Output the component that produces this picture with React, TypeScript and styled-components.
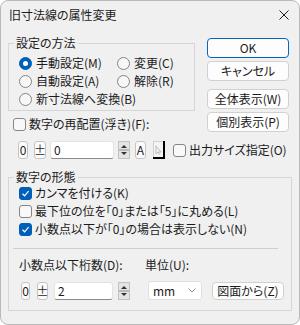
import React from 'react';
import styled, { createGlobalStyle } from 'styled-components';

const Global = createGlobalStyle`
  html, body { margin: 0; padding: 0; background: #ffffff; }
  body {
    font-family: "Noto Sans CJK JP", "Noto Sans", sans-serif;
    font-size: 12px;
    color: #1b1b1b;
    font-feature-settings: "palt" 1;
  }
  * { box-sizing: border-box; }
`;

const Window = styled.div`
  width: 300px;
  height: 325px;
  background: #f0f0f0;
  border: 1px solid #b9b9b9;
  border-radius: 8px;
  display: flex;
  flex-direction: column;
  overflow: hidden;
`;

const TitleBar = styled.div`
  height: 35px;
  flex: none;
  display: flex;
  align-items: flex-start;
  justify-content: space-between;
  padding: 6px 10px 0 8px;
`;

const TitleText = styled.span`
  line-height: 16px;
  font-size: 12px;
  color: #1b1b1b;
`;

const CloseIcon = styled.svg`
  margin-top: 3px;
  width: 10px;
  height: 10px;
`;

const Body = styled.div`
  padding: 0 7px;
  display: flex;
  flex-direction: column;
`;

const TopSection = styled.div`
  display: flex;
  gap: 12px;
`;

const LeftCol = styled.div`
  display: flex;
  flex-direction: column;
`;

const RightCol = styled.div`
  width: 82px;
  padding-top: 2px;
  display: flex;
  flex-direction: column;
`;

const GroupBox = styled.fieldset<{ $w: number }>`
  margin: 0;
  padding: 0;
  width: ${(p) => p.$w}px;
  border: 1px solid #d6d6d6;
  min-width: 0;
`;

const Legend = styled.legend`
  margin-left: 5px;
  padding: 0 2px;
  line-height: 14px;
  font-size: 12px;
`;

const GroupInner = styled.div<{ $pt: number; $pb: number; $pl: number }>`
  padding: ${(p) => p.$pt}px 0 ${(p) => p.$pb}px ${(p) => p.$pl}px;
  display: flex;
  flex-direction: column;
`;

const OptionGrid = styled.div`
  display: grid;
  grid-template-columns: 98px auto;
  grid-auto-rows: 18px;
`;

const Option = styled.label<{ $gap?: number; $span?: boolean; $ml?: number }>`
  display: flex;
  align-items: center;
  height: 18px;
  gap: ${(p) => p.$gap ?? 4}px;
  margin-left: ${(p) => p.$ml ?? 0}px;
  white-space: nowrap;
  line-height: 16px;
  ${(p) => (p.$span ? 'grid-column: 1 / span 2;' : '')}
`;

const Radio = styled.span<{ $checked?: boolean }>`
  width: 13px;
  height: 13px;
  border-radius: 50%;
  flex: none;
  display: flex;
  align-items: center;
  justify-content: center;
  background: ${(p) => (p.$checked ? '#005fb8' : '#f7f7f7')};
  border: 1px solid ${(p) => (p.$checked ? '#005fb8' : '#858585')};
  &::after {
    content: '';
    display: ${(p) => (p.$checked ? 'block' : 'none')};
    width: 5px;
    height: 5px;
    border-radius: 50%;
    background: #ffffff;
  }
`;

const Box = styled.span<{ $checked?: boolean }>`
  width: 13px;
  height: 13px;
  border-radius: 3px;
  flex: none;
  display: flex;
  align-items: center;
  justify-content: center;
  background: ${(p) => (p.$checked ? '#005fb8' : '#f8f8f8')};
  border: 1px solid ${(p) => (p.$checked ? '#005fb8' : '#858585')};
`;

const CheckBox = ({ checked }: { checked?: boolean }) => (
  <Box $checked={checked}>
    {checked && (
      <svg width="9" height="9" viewBox="0 0 9 9">
        <path d="M1.5 4.8 L3.6 6.8 L7.6 2.2" fill="none" stroke="#ffffff" strokeWidth="1.2" />
      </svg>
    )}
  </Box>
);

const DialogButton = styled.button<{ $primary?: boolean; $mt?: number; $w?: number; $h?: number; $ml?: number }>`
  font-family: inherit;
  font-size: 12px;
  font-feature-settings: "palt" 1;
  color: #1b1b1b;
  width: ${(p) => p.$w ?? 82}px;
  height: ${(p) => p.$h ?? 20}px;
  margin-top: ${(p) => p.$mt ?? 0}px;
  margin-left: ${(p) => p.$ml ?? 0}px;
  padding: 0;
  line-height: 16px;
  background: #fdfdfd;
  border: 1px solid ${(p) => (p.$primary ? '#0067c0' : '#d0d0d0')};
  box-shadow: ${(p) => (p.$primary ? 'inset 0 0 0 1px #ffffff' : 'none')};
  border-radius: 4px;
  flex: none;
`;

const Row = styled.div<{ $mt?: number; $pl?: number }>`
  display: flex;
  align-items: center;
  margin-top: ${(p) => p.$mt ?? 0}px;
  padding-left: ${(p) => p.$pl ?? 0}px;
`;

const MiniBox = styled.span<{ $w: number; $ml?: number }>`
  width: ${(p) => p.$w}px;
  height: 18px;
  margin-left: ${(p) => p.$ml ?? 0}px;
  flex: none;
  border: 1px solid #c4c4c4;
  border-radius: 3px;
  background: #fbfbfb;
  display: flex;
  align-items: center;
  justify-content: center;
  line-height: 16px;
  font-size: 12px;
`;

const NumInput = styled.div<{ $w: number; $ml: number }>`
  width: ${(p) => p.$w}px;
  height: 18px;
  margin-left: ${(p) => p.$ml}px;
  flex: none;
  background: #ffffff;
  border: 1px solid #e3e3e3;
  border-bottom-color: #8a8a8a;
  border-radius: 3px;
  padding-left: 3px;
  display: flex;
  align-items: center;
  line-height: 16px;
`;

const SpinnerBox = styled.svg<{ $ml: number }>`
  margin-left: ${(p) => p.$ml}px;
  flex: none;
  display: block;
`;

const Spinner = ({ ml }: { ml: number }) => (
  <SpinnerBox $ml={ml} width="12" height="18" viewBox="0 0 12 18">
    <rect x="0.5" y="0.5" width="11" height="17" fill="#e4e4e4" stroke="#c2c2c2" />
    <line x1="1" y1="9" x2="11" y2="9" stroke="#8c8c8c" />
    <path d="M3 7 L6 4 L9 7 Z" fill="#333333" />
    <path d="M3 11 L6 14 L9 11 Z" fill="#333333" />
  </SpinnerBox>
);

const IconBtn = styled.svg<{ $ml: number }>`
  margin-left: ${(p) => p.$ml}px;
  flex: none;
  display: block;
`;

const Select = styled.div<{ $ml: number }>`
  width: 54px;
  height: 19px;
  margin-left: ${(p) => p.$ml}px;
  flex: none;
  background: #ffffff;
  border: 1px solid #e0e0e0;
  border-radius: 3px;
  display: flex;
  align-items: center;
  justify-content: space-between;
  padding: 0 5px 0 4px;
  line-height: 16px;
`;

const Separator = styled.div`
  height: 1px;
  background: #cfcfcf;
  margin: 10px 13px 0 4px;
`;

const LabelRow = styled.div`
  display: grid;
  grid-template-columns: 126px auto;
  margin-top: 8px;
  padding-left: 10px;
  line-height: 16px;
`;

const Spacer = styled.div`
  height: 8px;
`;

export default function App() {
  return (
    <>
      <Global />
      <Window>
        <TitleBar>
          <TitleText>旧寸法線の属性変更</TitleText>
          <CloseIcon viewBox="0 0 10 10">
            <path d="M0.5 0.5 L9.5 9.5 M9.5 0.5 L0.5 9.5" stroke="#1b1b1b" strokeWidth="1" fill="none" />
          </CloseIcon>
        </TitleBar>
        <Body>
          <TopSection>
            <LeftCol>
              <GroupBox $w={187}>
                <Legend>設定の方法</Legend>
                <GroupInner $pt={4} $pb={2} $pl={10}>
                  <OptionGrid>
                    <Option><Radio $checked />手動設定(M)</Option>
                    <Option><Radio />変更(C)</Option>
                    <Option><Radio />自動設定(A)</Option>
                    <Option><Radio />解除(R)</Option>
                    <Option $span><Radio />新寸法線へ変換(B)</Option>
                  </OptionGrid>
                </GroupInner>
              </GroupBox>
              <Row $mt={4} $pl={5}>
                <Option $gap={3}><CheckBox />数字の再配置(浮き)(F):</Option>
              </Row>
            </LeftCol>
            <RightCol>
              <DialogButton $primary>OK</DialogButton>
              <DialogButton $mt={3}>キャンセル</DialogButton>
              <DialogButton $mt={8}>全体表示(W)</DialogButton>
              <DialogButton $mt={3}>個別表示(P)</DialogButton>
            </RightCol>
          </TopSection>

          <Row $mt={8} $pl={10}>
            <MiniBox $w={10}>0</MiniBox>
            <MiniBox $w={12} $ml={6}>±</MiniBox>
            <NumInput $w={64} $ml={4}>0</NumInput>
            <Spinner ml={4} />
            <MiniBox $w={11} $ml={5}>A</MiniBox>
            <IconBtn $ml={7} width="12" height="18" viewBox="0 0 12 18">
              <rect x="0" y="0" width="12" height="18" fill="#000000" />
              <rect x="0" y="0" width="10" height="16" fill="#f4f4f4" />
              <line x1="0.5" y1="0" x2="0.5" y2="16" stroke="#d0d0d0" />
              <line x1="0" y1="0.5" x2="10" y2="0.5" stroke="#d0d0d0" />
              <path d="M3 5 L3 13 M3 13 L5 11 L7 14 M5 11 L8 11 L3 5" stroke="#b0b0b0" strokeWidth="0.8" fill="none" />
            </IconBtn>
            <Option $gap={3} $ml={8}><CheckBox />出力サイズ指定(O)</Option>
          </Row>

          <Row $mt={11}>
            <GroupBox $w={285}>
              <Legend>数字の形態</Legend>
              <GroupInner $pt={0} $pb={10} $pl={0}>
                <Row $pl={10}>
                  <Option $gap={3}><CheckBox checked />カンマを付ける(K)</Option>
                </Row>
                <Row $pl={10}>
                  <Option $gap={3}><CheckBox />最下位の位を「0」または「5」に丸める(L)</Option>
                </Row>
                <Row $pl={10}>
                  <Option $gap={3}><CheckBox checked />小数点以下が「0」の場合は表示しない(N)</Option>
                </Row>
                <Separator />
                <LabelRow>
                  <span>小数点以下桁数(D):</span>
                  <span>単位(U):</span>
                </LabelRow>
                <Spacer />
                <Row $pl={12}>
                  <MiniBox $w={9}>0</MiniBox>
                  <MiniBox $w={11} $ml={7}>±</MiniBox>
                  <NumInput $w={59} $ml={6}>2</NumInput>
                  <Spinner ml={5} />
                  <Select $ml={18}>
                    <span>mm</span>
                    <svg width="8" height="5" viewBox="0 0 8 5">
                      <path d="M0.5 0.5 L4 4 L7.5 0.5" stroke="#8a8a8a" fill="none" />
                    </svg>
                  </Select>
                  <DialogButton $w={72} $h={18} $ml={10}>図面から(Z)</DialogButton>
                </Row>
              </GroupInner>
            </GroupBox>
          </Row>
        </Body>
      </Window>
    </>
  );
}
